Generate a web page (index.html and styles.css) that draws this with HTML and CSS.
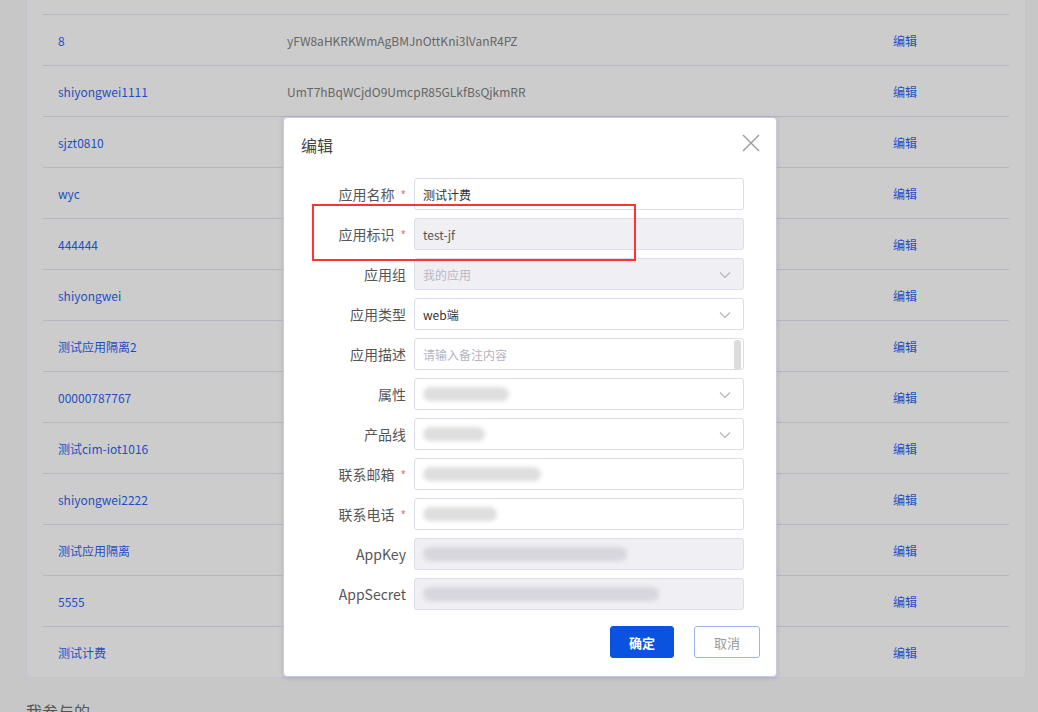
FILE: index.html
```html
<!DOCTYPE html>
<html lang="zh-CN">
<head>
    <meta charset="UTF-8">
    <meta name="viewport" content="width=device-width, initial-scale=1.0">
    <title>我的应用</title>
    <link rel="stylesheet" href="styles.css">
</head>
<body>
    <div class="page">
        <div class="card">
            <div class="row"></div>
            <div class="row"><span class="name">8</span><span class="secret">yFW8aHKRKWmAgBMJnOttKni3lVanR4PZ</span><span class="op">编辑</span></div>
            <div class="row"><span class="name">shiyongwei1111</span><span class="secret">UmT7hBqWCjdO9UmcpR85GLkfBsQjkmRR</span><span class="op">编辑</span></div>
            <div class="row"><span class="name">sjzt0810</span><span class="secret"></span><span class="op">编辑</span></div>
            <div class="row"><span class="name">wyc</span><span class="secret"></span><span class="op">编辑</span></div>
            <div class="row"><span class="name">444444</span><span class="secret"></span><span class="op">编辑</span></div>
            <div class="row"><span class="name">shiyongwei</span><span class="secret"></span><span class="op">编辑</span></div>
            <div class="row"><span class="name">测试应用隔离2</span><span class="secret"></span><span class="op">编辑</span></div>
            <div class="row"><span class="name">00000787767</span><span class="secret"></span><span class="op">编辑</span></div>
            <div class="row"><span class="name">测试cim-iot1016</span><span class="secret"></span><span class="op">编辑</span></div>
            <div class="row"><span class="name">shiyongwei2222</span><span class="secret"></span><span class="op">编辑</span></div>
            <div class="row"><span class="name">测试应用隔离</span><span class="secret"></span><span class="op">编辑</span></div>
            <div class="row"><span class="name">5555</span><span class="secret"></span><span class="op">编辑</span></div>
            <div class="row"><span class="name">测试计费</span><span class="secret"></span><span class="op">编辑</span></div>
        </div>
        <h3 class="section">我参与的</h3>
    </div>

    <!-- 编辑弹窗 -->
    <div class="dialog">
        <div class="dialog-head">
            <span class="dialog-title">编辑</span>
            <svg class="close" width="18" height="18" viewBox="0 0 18 18">
                <path d="M1 1L17 17M17 1L1 17" stroke="#9a9aa6" stroke-width="1.4" fill="none"/>
            </svg>
        </div>
        <div class="form">
            <label class="label">应用名称<i>*</i></label>
            <div class="field">测试计费</div>

            <label class="label">应用标识<i>*</i></label>
            <div class="field disabled dark">test-jf</div>

            <label class="label">应用组</label>
            <div class="field disabled muted select">我的应用<svg class="arrow" width="12" height="8" viewBox="0 0 12 8"><path d="M1 1.5L6 6.5L11 1.5" stroke="#b4b4c0" stroke-width="1.2" fill="none"/></svg></div>

            <label class="label">应用类型</label>
            <div class="field select">web端<svg class="arrow" width="12" height="8" viewBox="0 0 12 8"><path d="M1 1.5L6 6.5L11 1.5" stroke="#b4b4c0" stroke-width="1.2" fill="none"/></svg></div>

            <label class="label">应用描述</label>
            <div class="field placeholder">请输入备注内容<span class="scroll"></span></div>

            <label class="label">属性</label>
            <div class="field select"><span class="smudge" style="width:86px"></span><svg class="arrow" width="12" height="8" viewBox="0 0 12 8"><path d="M1 1.5L6 6.5L11 1.5" stroke="#b4b4c0" stroke-width="1.2" fill="none"/></svg></div>

            <label class="label">产品线</label>
            <div class="field select"><span class="smudge" style="width:62px"></span><svg class="arrow" width="12" height="8" viewBox="0 0 12 8"><path d="M1 1.5L6 6.5L11 1.5" stroke="#b4b4c0" stroke-width="1.2" fill="none"/></svg></div>

            <label class="label">联系邮箱<i>*</i></label>
            <div class="field"><span class="smudge" style="width:118px"></span></div>

            <label class="label">联系电话<i>*</i></label>
            <div class="field"><span class="smudge" style="width:74px"></span></div>

            <label class="label">AppKey</label>
            <div class="field disabled"><span class="smudge dim" style="width:204px"></span></div>

            <label class="label">AppSecret</label>
            <div class="field disabled"><span class="smudge dim" style="width:236px"></span></div>
        </div>
        <div class="dialog-foot">
            <button class="btn primary">确定</button>
            <button class="btn plain">取消</button>
        </div>
        <div class="mark"></div>
    </div>
</body>
</html>
```

FILE: styles.css
```css
*{
    box-sizing: border-box;
}
body{
    margin: 0;
    height: 712px;
    overflow: hidden;
    background: #c7c7c7;
    font-family: "Noto Sans CJK SC", "Noto Sans", sans-serif;
}
.page{
    padding: 0 12px 0 26px;
}
.card{
    width: 1000px;
    margin-top: -38px;
    padding: 0 16px;
    background: #cccccc;
    border: 1px solid #c3c3d3;
    border-radius: 4px;
}
.row{
    display: flex;
    align-items: center;
    height: 51px;
    border-top: 1px solid #b5b5c6;
    font-size: 12px;
}
.row:first-child{
    border-top: none;
}
.name{
    width: 244px;
    padding-left: 15px;
    color: #1e4fc2;
}
.secret{
    width: 606px;
    color: #666;
}
.op{
    color: #1e4fc2;
}
.section{
    margin: 21px 0 0;
    font-size: 16px;
    font-weight: normal;
    color: #555;
}

/* 弹窗 */
.dialog{
    position: absolute;
    left: 283px;
    top: 117px;
    width: 494px;
    height: 560px;
    background: #fff;
    border: 1px solid #c9c9dd;
    border-radius: 4px;
    box-shadow: 0 1px 4px rgba(90, 90, 160, 0.25);
}
.dialog-head{
    display: flex;
    justify-content: space-between;
    align-items: center;
    height: 54px;
    padding: 0 16px 0 17px;
}
.dialog-title{
    font-size: 16px;
    color: #444;
}
.close{
    margin-top: -4px;
}
.form{
    display: grid;
    grid-template-columns: 122px 330px;
    column-gap: 8px;
    row-gap: 8px;
    margin-top: 6px;
}
.label{
    display: flex;
    align-items: center;
    justify-content: flex-end;
    height: 32px;
    font-size: 14px;
    color: #555;
}
.label i{
    font-style: normal;
    color: #f56c6c;
    margin-left: 6px;
    font-size: 12px;
}
.field{
    position: relative;
    display: flex;
    align-items: center;
    height: 32px;
    padding: 0 8px;
    border: 1px solid #dcdcea;
    border-radius: 3px;
    font-size: 12px;
    color: #333;
    background: #fff;
}
.field.disabled{
    background: #efeff4;
}
.field.dark{
    color: #555;
}
.field.muted{
    color: #b8b8c4;
}
.field.placeholder{
    color: #b4b4c0;
}
.arrow{
    position: absolute;
    right: 12px;
    top: 12px;
}
.scroll{
    position: absolute;
    right: 2px;
    top: 1px;
    width: 7px;
    height: 30px;
    background: #dcdcdc;
    border-radius: 3px;
}
.smudge{
    display: block;
    height: 14px;
    background: #dedede;
    border-radius: 7px;
    filter: blur(2px);
}
.smudge.dim{
    background: #d6d6dc;
}
.dialog-foot{
    display: flex;
    justify-content: flex-end;
    gap: 20px;
    margin-top: 16px;
    padding-right: 16px;
}
.btn{
    height: 32px;
    border-radius: 3px;
    font-size: 13px;
    font-family: "Noto Sans CJK SC", sans-serif;
}
.primary{
    width: 64px;
    background: #0a52e0;
    border: 1px solid #0a52e0;
    color: #fff;
    font-weight: bold;
}
.plain{
    width: 66px;
    background: #fff;
    border: 1px solid #9ab4f0;
    color: #999;
}
.mark{
    position: absolute;
    left: 28px;
    top: 86px;
    width: 324px;
    height: 57px;
    border: 2px solid #f33;
}
```
